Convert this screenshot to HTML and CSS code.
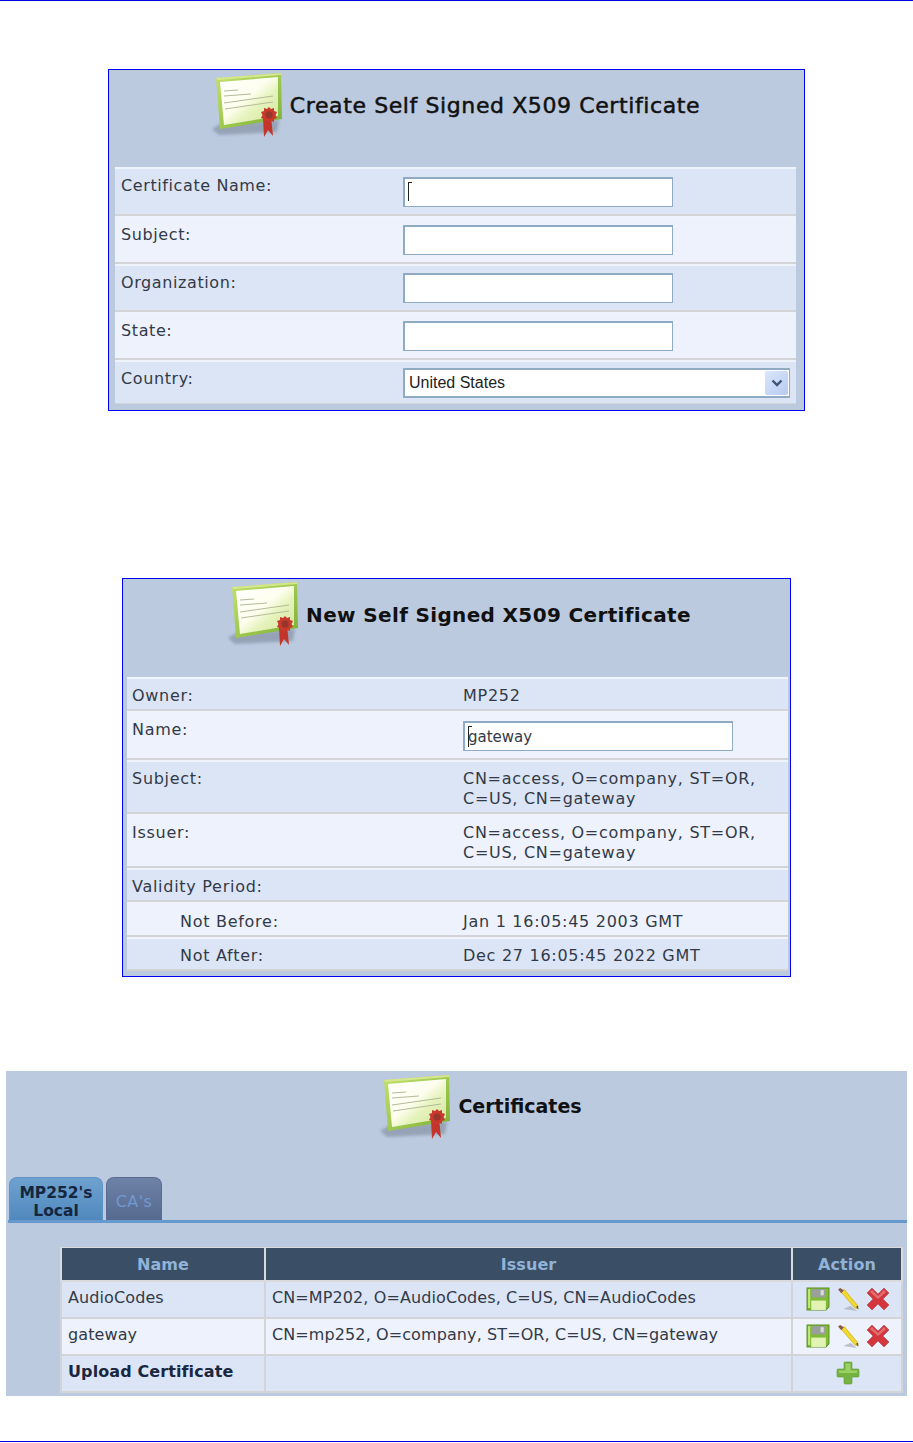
FILE: index.html
```html
<!DOCTYPE html>
<html>
	<head>
		<meta charset="utf-8">
		<title>Certificates</title>
		<link rel="stylesheet" href="styles.css">
	</head>
	<body>
		<svg class="defs" width="0" height="0">
			<defs>
				<linearGradient id="paper" x1="0" y1="0" x2="1" y2="1">
					<stop offset="0" stop-color="#ffffff"/>
					<stop offset="0.45" stop-color="#fdfeee"/>
					<stop offset="0.62" stop-color="#e6f3bd"/>
					<stop offset="1" stop-color="#cfe59a"/>
				</linearGradient>
				<linearGradient id="green" x1="0" y1="0" x2="1" y2="1">
					<stop offset="0" stop-color="#c2e26c"/>
					<stop offset="1" stop-color="#7db035"/>
				</linearGradient>
				<filter id="soft"><feGaussianBlur stdDeviation="1.6"/></filter>
				<symbol id="cert" viewBox="0 0 72 68">
					<path d="M1 57L9 52L68 48L66 60L30 62L8 63Z" fill="#7f8a9c" opacity=".6" filter="url(#soft)"/>
					<path d="M5 6L70 1L71 47L9 57Z" fill="url(#green)"/>
					<path d="M5 6L70 1L70 3L7 8Z" fill="#d6e68e"/>
					<path d="M9 10L67 5L67 44L13 53Z" fill="url(#paper)"/>
					<path d="M13 19L27 18M13 24L40 22M13 31L62 24M14 37L62 30" stroke="#b4bb9a" stroke-width="1" fill="none"/>
					<path d="M52 46L60 44L62 64L57 58L53 65Z" fill="#c3352a"/>
					<path d="M58 35L60 37L63 36L63 39L66 40L64.500 43L66 46L63 47L63 50L60 49L58 51L56 49L53 50L53 47L50 46L51.500 43L50 40L53 39L53 36L56 37Z" fill="#c8382c"/>
					<circle cx="58" cy="43" r="3.500" fill="#96352a"/>
				</symbol>
				<symbol id="save" viewBox="0 0 23 23">
					<path d="M1 1H22V19L19 22H1Z" fill="#7fbb35" stroke="#5b8f22" stroke-width="1"/>
					<rect x="5" y="2" width="14" height="8" fill="#9a9f9c"/>
					<rect x="14" y="3" width="3" height="5" fill="#d9dcd8"/>
					<rect x="5" y="13" width="14" height="9" fill="#e2f3b4"/>
					<rect x="2" y="2" width="2" height="18" fill="#c4e77e"/>
				</symbol>
				<symbol id="pencil" viewBox="0 0 23 23">
					<path d="M7 21L20 23L14 18Z" fill="#a7adb6" opacity=".7"/>
					<path d="M5 5L8 2.500L21 18L21 21L18 20Z" fill="#f1d82c" stroke="#c9a515" stroke-width=".6"/>
					<path d="M2 2.500L4 1L7.500 3L5 6Z" fill="#8c5a4c"/>
					<path d="M19 19L21 18L21.500 21.500Z" fill="#5c5c52"/>
				</symbol>
				<symbol id="del" viewBox="0 0 24 24">
					<path d="M6 1L12 7L18 1L23 6L17 12L23 18L18 23L12 17L6 23L1 18L7 12L1 6Z" fill="#d3363c" stroke="#b1474c" stroke-width=".6"/>
					<path d="M6 3L12 9L18 3L20 5L12 12L4 5Z" fill="#e98688" opacity=".7"/>
				</symbol>
				<symbol id="plus" viewBox="0 0 24 24">
					<path d="M9 1H15Q16 1 16 2V8H22Q23 8 23 9V15Q23 16 22 16H16V22Q16 23 15 23H9Q8 23 8 22V16H2Q1 16 1 15V9Q1 8 2 8H8V2Q8 1 9 1Z" fill="#74b33f" stroke="#5f9a35" stroke-width=".6"/>
					<path d="M9.500 2.500H14.500V9.500H21V12H3V9.500H9.500Z" fill="#a6d873" opacity=".8"/>
				</symbol>
			</defs>
		</svg>

		<div class="page">
			<div class="rule top"></div>

			<div class="panel panel-create">
				<div class="panel-head head-create">
					<svg class="cert"><use href="#cert"/></svg>
					<h1 class="title">Create Self Signed X509 Certificate</h1>
				</div>
				<div class="rows">
					<div class="row tall first">
						<div class="label">Certificate Name:</div>
						<div class="input"><span class="caret"></span></div>
					</div>
					<div class="row tall alt">
						<div class="label">Subject:</div>
						<div class="input"></div>
					</div>
					<div class="row tall">
						<div class="label">Organization:</div>
						<div class="input"></div>
					</div>
					<div class="row tall alt">
						<div class="label">State:</div>
						<div class="input"></div>
					</div>
					<div class="row tall last">
						<div class="label">Country:</div>
						<div class="select">
							<span class="select-text">United States</span>
							<span class="select-btn">
								<svg width="12" height="8" viewBox="0 0 12 8"><path d="M1.500 1.500L6 6L10.500 1.500" fill="none" stroke="#3d5573" stroke-width="2.400"/></svg>
							</span>
						</div>
					</div>
				</div>
			</div>

			<div class="panel panel-new">
				<div class="panel-head head-new">
					<svg class="cert"><use href="#cert"/></svg>
					<h1 class="title bold">New Self Signed X509 Certificate</h1>
				</div>
				<div class="rows">
					<div class="row r-owner">
						<div class="label">Owner:</div>
						<div class="value">MP252</div>
					</div>
					<div class="row r-name alt">
						<div class="label">Name:</div>
						<div class="input small"><span class="caret short"></span>gateway</div>
					</div>
					<div class="row r-multi">
						<div class="label">Subject:</div>
						<div class="value">CN=access, O=company, ST=OR,<br>C=US, CN=gateway</div>
					</div>
					<div class="row r-multi alt">
						<div class="label">Issuer:</div>
						<div class="value">CN=access, O=company, ST=OR,<br>C=US, CN=gateway</div>
					</div>
					<div class="row r-owner">
						<div class="label">Validity Period:</div>
						<div class="value"></div>
					</div>
					<div class="row r-owner r-wider alt">
						<div class="label indent">Not Before:</div>
						<div class="value">Jan 1 16:05:45 2003 GMT</div>
					</div>
					<div class="row r-owner">
						<div class="label indent">Not After:</div>
						<div class="value">Dec 27 16:05:45 2022 GMT</div>
					</div>
				</div>
			</div>

			<div class="panel-wide">
				<div class="panel-head head-wide">
					<svg class="cert"><use href="#cert"/></svg>
					<h1 class="title bold">Certificates</h1>
				</div>
				<div class="tabs">
					<div class="tab active">MP252's<br>Local</div>
					<div class="tab">CA's</div>
				</div>
				<table class="list">
					<tr>
						<th class="c-name">Name</th>
						<th class="c-issuer">Issuer</th>
						<th class="c-action">Action</th>
					</tr>
					<tr>
						<td>AudioCodes</td>
						<td>CN=MP202, O=AudioCodes, C=US, CN=AudioCodes</td>
						<td class="actions">
							<svg class="ico"><use href="#save"/></svg><svg class="ico"><use href="#pencil"/></svg><svg class="ico"><use href="#del"/></svg>
						</td>
					</tr>
					<tr class="alt">
						<td>gateway</td>
						<td>CN=mp252, O=company, ST=OR, C=US, CN=gateway</td>
						<td class="actions">
							<svg class="ico"><use href="#save"/></svg><svg class="ico"><use href="#pencil"/></svg><svg class="ico"><use href="#del"/></svg>
						</td>
					</tr>
					<tr>
						<td><b>Upload Certificate</b></td>
						<td></td>
						<td class="actions"><svg class="ico"><use href="#plus"/></svg></td>
					</tr>
				</table>
			</div>

			<div class="rule bottom"></div>
		</div>
	</body>
</html>
```

FILE: styles.css
```css
* {
  padding: 0;
  margin: 0;
  box-sizing: border-box;
}

body {
  font-family: "DejaVu Sans", sans-serif;
  font-size: 16px;
  color: #333a47;
  background: #fff;
}

.defs {
  display: block;
  height: 0;
}

.page {
  height: 1443px;
  display: flex;
  flex-direction: column;
  align-items: center;
}

.rule {
  width: 100%;
  height: 1px;
  background: #0000e0;
}

.rule.top {
  margin-bottom: 68px;
}

.rule.bottom {
  margin-top: 45px;
}

.panel {
  border: 1px solid #0000f0;
  background: #bbcadf;
}

.panel-create {
  width: 697px;
  height: 342px;
  padding: 0 8px 0 6px;
  margin-bottom: 167px;
  letter-spacing: 0.6px;
}

.panel-new {
  width: 669px;
  height: 399px;
  padding: 0 2px 0 4px;
  margin-bottom: 94px;
  letter-spacing: 0.72px;
}

.panel-wide {
  width: 901px;
  height: 325px;
  background: #bbcadf;
  letter-spacing: 0.1px;
}

.panel-head {
  display: flex;
  align-items: flex-start;
  justify-content: center;
}

.head-create {
  height: 97px;
  padding-top: 2px;
}

.head-new {
  height: 98px;
  padding-top: 2px;
  padding-left: 3px;
}

.head-wide {
  height: 106px;
  padding-top: 3px;
  padding-left: 48px;
}

.cert {
  width: 72px;
  height: 68px;
  flex-shrink: 0;
}

.title {
  font-size: 22px;
  font-weight: normal;
  color: #111;
  -webkit-text-stroke: 0.5px #111;
  letter-spacing: 0.6px;
  margin-left: 7px;
  margin-top: 21px;
  line-height: 26px;
}

.title.bold {
  font-weight: bold;
  -webkit-text-stroke: 0;
  font-size: 20px;
  letter-spacing: 0.35px;
}

.head-wide .title.bold {
  font-size: 19px;
  letter-spacing: 0;
  margin-top: 19px;
}

.rows {
  display: flex;
  flex-direction: column;
}

.row {
  display: flex;
  background: #dce5f6;
  border-top: 2px solid #eef3fc;
  border-bottom: 2px solid #d3d4d8;
  padding-left: 6px;
}

.row.alt {
  background: #edf2fd;
}

.row.tall {
  height: 48px;
  padding-top: 7px;
}

.row.tall.first {
  height: 49px;
}

.row.tall.first .input {
  margin-top: 1px;
}

.row.tall.last {
  height: 44px;
  border-bottom-width: 1px;
}

.row.tall .label {
  width: 282px;
}

.label {
  line-height: 20px;
  flex-shrink: 0;
}

.indent {
  padding-left: 48px;
}

.input {
  position: relative;
  width: 270px;
  height: 30px;
  background: #fff;
  border: 2px solid #8fabc4;
  border-right-width: 1px;
  border-bottom-width: 1px;
  padding-left: 3px;
  font-size: 15px;
  letter-spacing: 0;
  line-height: 28px;
}

.select {
  display: flex;
  align-items: center;
  justify-content: space-between;
  width: 387px;
  height: 30px;
  margin-top: -1px;
  background: #fff;
  border: 2px solid #8fabc4;
  border-right-width: 1px;
  border-bottom-width: 2px;
  padding: 0 1px 0 4px;
}

.select-text {
  font-family: "Liberation Sans", sans-serif;
  font-size: 16px;
  letter-spacing: 0;
  color: #222;
}

.select-btn {
  display: flex;
  align-items: center;
  justify-content: center;
  width: 23px;
  height: 24px;
  border-radius: 2px;
  background: linear-gradient(135deg, #dbe6fb, #b6cbf2);
}

.caret {
  position: absolute;
  left: 3px;
  top: 3px;
  width: 4px;
  height: 19px;
  border-left: 1px solid #222;
  border-top: 1px solid #222;
}

.caret.short {
  height: 21px;
}

.r-owner {
  height: 34px;
  line-height: 30px;
  align-items: center;
  padding-left: 5px;
  padding-top: 4px;
}

.r-wider {
  height: 35px;
}

.r-name {
  height: 49px;
  padding-left: 5px;
  padding-top: 7px;
}

.r-multi {
  height: 54px;
  padding-left: 5px;
  padding-top: 7px;
}

.panel-new .label {
  width: 331px;
}

.panel-new .input.small {
  margin-top: 1px;
}

.value {
  line-height: 20px;
}

.tabs {
  display: flex;
  align-items: flex-end;
  gap: 3px;
  height: 46px;
  margin-left: 2px;
  padding-left: 1px;
  border-bottom: 3px solid #6699cc;
  margin-bottom: 24px;
}

.tab {
  width: 56px;
  height: 43px;
  border: 1px solid #5a6b8f;
  border-bottom: 0;
  border-radius: 8px 8px 0 0;
  background: linear-gradient(#6e81a6, #566a90);
  color: #6f9ad0;
  text-align: center;
  line-height: 47px;
  letter-spacing: 0.4px;
}

.tab.active {
  width: 94px;
  border-color: #5d93c6;
  background: linear-gradient(#6ea1cf, #5089bf);
  color: #15273f;
  font-size: 15.500px;
  font-weight: bold;
  letter-spacing: 0;
  line-height: 18px;
  padding-top: 6px;
}

.list {
  width: 843px;
  margin-left: 54px;
  border-collapse: collapse;
  table-layout: fixed;
  background: #dce5f6;
}

.list th {
  height: 33px;
  background: #3a4f66;
  color: #91b3d8;
  border: 2px solid #d8dadd;
  border-top: 1px solid #d8dadd;
  padding-top: 1px;
}

.list td {
  height: 37px;
  padding: 0 0 4px 6px;
  border: 2px solid #d3d4d8;
}

.list tr.alt td {
  background: #edf2fd;
}

.list b {
  color: #1a2740;
}

.c-name {
  width: 204px;
}

.c-action {
  width: 110px;
}

.list td.actions {
  padding: 0 0 0 1px;
  text-align: center;
}

.ico {
  width: 24px;
  height: 24px;
  margin: 0 3px;
  vertical-align: middle;
}
```
